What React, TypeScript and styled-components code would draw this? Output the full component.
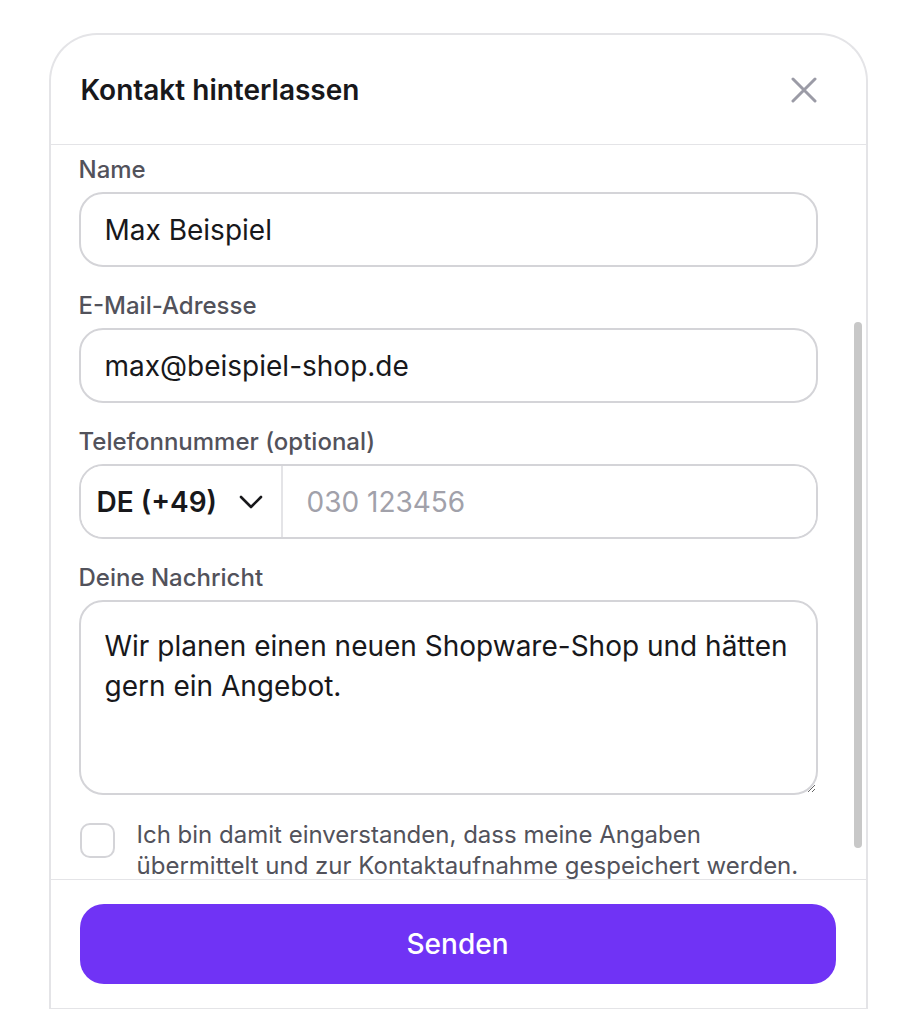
import React from 'react'
import styled, { createGlobalStyle } from 'styled-components'

const GlobalStyle = createGlobalStyle`
  * { box-sizing: border-box; }
  html, body { margin: 0; padding: 0; background: #fff; }
  body {
    font-family: Inter, "Noto Sans", "Liberation Sans", sans-serif;
    color: #18181b;
    -webkit-font-smoothing: antialiased;
  }
`

const Page = styled.div`
  display: flex;
  justify-content: center;
  padding-top: 33px;
`

const Card = styled.div`
  width: 819px;
  background: #fff;
  border: 2px solid #e4e4e7;
  border-bottom: 0;
  border-radius: 48px 48px 0 0;
  display: flex;
  flex-direction: column;
`

const Header = styled.header`
  height: 110px;
  display: flex;
  align-items: center;
  justify-content: space-between;
  padding: 0 40px 0 30px;
  border-bottom: 1px solid #e4e4e7;
`

const Title = styled.h2`
  margin: 0;
  font-size: 28px;
  font-weight: 600;
  color: #18181b;
`

const CloseButton = styled.button`
  width: 44px;
  height: 44px;
  border: 0;
  padding: 0;
  background: transparent;
  display: flex;
  align-items: center;
  justify-content: center;
  cursor: pointer;
  color: #9b9ba6;
`

const BodyFrame = styled.div`
  position: relative;
  height: 734px;
`

const Body = styled.div`
  height: 100%;
  overflow-y: auto;
  scrollbar-width: none;
  padding: 10px 48px 40px 28px;
  display: flex;
  flex-direction: column;
  gap: 24px;
  &::-webkit-scrollbar {
    display: none;
  }
`

const ScrollThumb = styled.div`
  position: absolute;
  right: 4px;
  top: 177px;
  width: 8px;
  height: 526px;
  border-radius: 4px;
  background: #c8c8c8;
  pointer-events: none;
`

const Field = styled.div`
  display: flex;
  flex-direction: column;
  gap: 7px;
`

const Label = styled.label`
  font-size: 24px;
  line-height: 30px;
  font-weight: 500;
  color: #52525b;
`

const TextInput = styled.input`
  width: 100%;
  height: 75px;
  border: 2px solid #d4d4d8;
  border-radius: 24px;
  padding: 0 24px;
  font-family: inherit;
  font-size: 28px;
  color: #18181b;
  background: #fff;
  outline: none;
  &::placeholder {
    color: #a1a1aa;
  }
`

const PhoneGroup = styled.div`
  display: flex;
  height: 75px;
  border: 2px solid #d4d4d8;
  border-radius: 24px;
  overflow: hidden;
`

const CountrySelect = styled.button`
  width: 202px;
  flex: none;
  display: flex;
  align-items: center;
  gap: 22px;
  padding: 0 16px;
  border: 0;
  border-right: 2px solid #e4e4e7;
  background: #fff;
  font-family: inherit;
  font-size: 28px;
  font-weight: 600;
  color: #18181b;
  white-space: nowrap;
  cursor: pointer;
`

const PhoneInput = styled.input`
  flex: 1;
  min-width: 0;
  border: 0;
  padding: 0 24px;
  font-family: inherit;
  font-size: 28px;
  color: #18181b;
  outline: none;
  &::placeholder {
    color: #a1a1aa;
  }
`

const MessageArea = styled.textarea`
  width: 100%;
  height: 195px;
  border: 2px solid #d4d4d8;
  border-radius: 24px;
  padding: 24px;
  font-family: inherit;
  font-size: 28px;
  line-height: 40px;
  color: #18181b;
  resize: vertical;
  outline: none;
`

const ConsentRow = styled.label`
  display: flex;
  align-items: flex-start;
  gap: 22px;
  cursor: pointer;
`

const CheckBox = styled.input`
  appearance: none;
  flex: none;
  width: 35px;
  height: 35px;
  margin: 4px 0 0 1px;
  border: 2px solid #d4d4d8;
  border-radius: 10px;
  background: #fff;
`

const ConsentText = styled.span`
  font-size: 24px;
  line-height: 31px;
  color: #52525b;
`

const Footer = styled.footer`
  padding: 24px 30px 24px 29px;
  border-top: 1px solid #e4e4e7;
  border-bottom: 1px solid #e4e4e7;
`

const SubmitButton = styled.button`
  width: 100%;
  height: 80px;
  border: 0;
  border-radius: 24px;
  background: #7033f5;
  color: #fff;
  font-family: inherit;
  font-size: 28px;
  font-weight: 500;
  cursor: pointer;
`

const CloseIcon = () => (
  <svg width="26" height="26" viewBox="0 0 26 26" fill="none">
    <path
      d="M2 2L24 24M24 2L2 24"
      stroke="currentColor"
      strokeWidth="3"
      strokeLinecap="round"
    />
  </svg>
)

const ChevronIcon = () => (
  <svg width="24" height="14" viewBox="0 0 24 14" fill="none">
    <path
      d="M2 2L12 12L22 2"
      stroke="#18181b"
      strokeWidth="2.6"
      strokeLinecap="round"
      strokeLinejoin="round"
    />
  </svg>
)

export default function App() {
  return (
    <>
      <GlobalStyle />
      <Page>
        <Card>
          <Header>
            <Title>Kontakt hinterlassen</Title>
            <CloseButton aria-label="Schließen">
              <CloseIcon />
            </CloseButton>
          </Header>
          <BodyFrame>
            <Body>
              <Field>
                <Label>Name</Label>
                <TextInput defaultValue="Max Beispiel" />
              </Field>
              <Field>
                <Label>E-Mail-Adresse</Label>
                <TextInput type="email" defaultValue="max@beispiel-shop.de" />
              </Field>
              <Field>
                <Label>Telefonnummer (optional)</Label>
                <PhoneGroup>
                  <CountrySelect type="button">
                    DE (+49)
                    <ChevronIcon />
                  </CountrySelect>
                  <PhoneInput type="tel" placeholder="030 123456" />
                </PhoneGroup>
              </Field>
              <Field>
                <Label>Deine Nachricht</Label>
                <MessageArea defaultValue="Wir planen einen neuen Shopware-Shop und hätten gern ein Angebot." />
              </Field>
              <ConsentRow>
                <CheckBox type="checkbox" />
                <ConsentText>
                  Ich bin damit einverstanden, dass meine Angaben übermittelt
                  und zur Kontaktaufnahme gespeichert werden.
                </ConsentText>
              </ConsentRow>
            </Body>
            <ScrollThumb />
          </BodyFrame>
          <Footer>
            <SubmitButton type="button">Senden</SubmitButton>
          </Footer>
        </Card>
      </Page>
    </>
  )
}
